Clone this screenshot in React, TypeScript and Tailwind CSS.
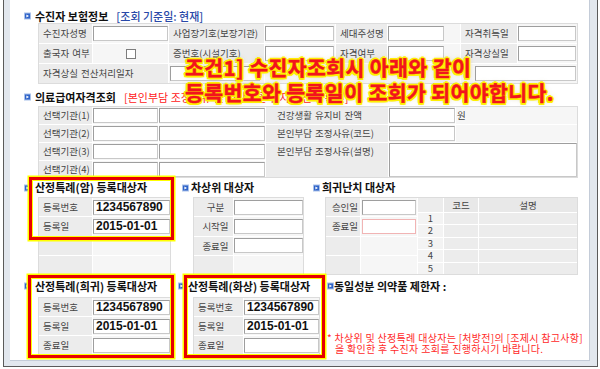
import React from "react";

const Icon = () => (
  <svg width="7" height="8" viewBox="0 0 7 8" className="shrink-0">
    <rect x="0.5" y="1" width="6" height="6" fill="#2f63c8" stroke="#a9c1ea" strokeWidth="1" />
    <path d="M2.4 2.6 L5 4 L2.4 5.4 Z" fill="#fff" />
  </svg>
);

const Title = ({ children, className = "" }: { children: React.ReactNode; className?: string }) => (
  <div className={`flex items-center text-[11px] font-bold text-[#111] whitespace-nowrap ${className}`}>
    <Icon />
    {children}
  </div>
);

const Field = ({ className = "", children }: { className?: string; children?: React.ReactNode }) => (
  <div
    className={`h-[15px] bg-white border border-[#c8c8c8] border-t-[#9e9e9e] border-l-[#9e9e9e] ${className}`}
  >
    {children}
  </div>
);

const Value = ({ children }: { children: React.ReactNode }) => (
  <Field className="w-full flex items-center pl-[2px] text-[12px] font-bold text-[#111] font-['Liberation_Sans',sans-serif]">
    {children}
  </Field>
);

const L = ({ children, className = "" }: { children?: React.ReactNode; className?: string }) => (
  <div className={`bg-[#ececec] text-[9.5px] text-[#444] [word-spacing:1px] flex items-center pl-[4px] whitespace-nowrap ${className}`}>
    {children}
  </div>
);

const V = ({ children, className = "" }: { children?: React.ReactNode; className?: string }) => (
  <div className={`bg-[#f6f6f6] flex items-center ${className}`}>{children}</div>
);

const RedBox = ({ className }: { className: string }) => (
  <div
    className={`absolute border-[3px] border-[#e60000] shadow-[0_0_0_1.5px_#ffff00,inset_0_0_0_1px_#ffff00] pointer-events-none ${className}`}
  />
);

export default function App() {
  return (
    <div className="w-[600px] h-[369px] bg-white overflow-hidden font-['Noto_Sans_CJK_KR',sans-serif]">
      <div className="ml-[3px] mr-[2px] h-[367px] border-l border-r border-b border-[#5a5a5a] bg-[#e2e7ee] pl-[6px] pr-[7px] pb-[5px] flex flex-col">
        <div className="relative flex-1 bg-white border-r border-b border-[#c4ccd8] pl-[14px]">
          {/* 수진자 보험정보 */}
          <Title className="h-[14px] mt-[9px] gap-[4px]">
            수진자 보험정보
            <span className="ml-[4px] font-medium text-[#2848a8]">[조회 기준일: 현재]</span>
          </Title>
          <div className="ml-[14px] w-[540px] grid grid-cols-[53px_75px_95px_70px_51px_72px_56px_59px] grid-rows-[19px_19px_19px] gap-px bg-white border border-[#dcdcdc]">
            <L className="pl-[3px]">수진자성명</L>
            <V><Field className="w-full" /></V>
            <L className="pl-[3px]">사업장기호(보장기관)</L>
            <V><Field className="w-[69px]" /></V>
            <L className="pl-[2px]">세대주성명</L>
            <V><Field className="w-[56px]" /></V>
            <L className="pl-[4px]">자격취득일</L>
            <V><Field className="w-[58px]" /></V>

            <L className="pl-[3px]">출국자 여부</L>
            <V className="justify-center">
              <div className="w-[10px] h-[10px] bg-white border-[1.5px] border-[#7d7d7d]" />
            </V>
            <L className="pl-[3px]">증번호(시설기호)</L>
            <V><Field className="w-[69px]" /></V>
            <L className="pl-[2px]">자격여부</L>
            <V><Field className="w-[56px]" /></V>
            <L className="pl-[4px]">자격상실일</L>
            <V><Field className="w-[58px]" /></V>

            <L className="col-span-2 pl-[3px]">자격상실 전산처리일자</L>
            <V className="pl-[1px]"><Field className="w-[90px]" /></V>
            <V className="col-span-3" />
            <V className="col-span-2 pl-[14px]"><Field className="w-[101px]" /></V>
          </div>

          {/* 의료급여자격조회 */}
          <Title className="h-[14px] mt-[6px] gap-[4px]">
            의료급여자격조회
            <span className="ml-[4px] font-normal text-[#ff2020]">[본인부담 조정사유 및 건강생활 유지비 잔액 확인]</span>
          </Title>
          <div className="mt-[2px] ml-[14px] w-[540px] grid grid-cols-[53px_65px_106px_122px_66px_121px] grid-rows-[17px_17px_17px_16px] gap-px bg-white border border-[#dcdcdc]">
            <L>선택기관(1)</L>
            <V><Field className="w-full" /></V>
            <V><Field className="w-full" /></V>
            <L className="pl-[11px]">건강생활 유지비 잔액</L>
            <V><Field className="w-full" /></V>
            <V className="pl-[1px] text-[9.5px] text-[#444]">원</V>

            <L>선택기관(2)</L>
            <V><Field className="w-full" /></V>
            <V><Field className="w-full" /></V>
            <L className="pl-[11px]">본인부담 조정사유(코드)</L>
            <V><Field className="w-full" /></V>
            <V />

            <L>선택기관(3)</L>
            <V><Field className="w-full" /></V>
            <V><Field className="w-full" /></V>
            <L className="row-span-2 pl-[11px] items-start pt-[1px]">본인부담 조정사유(설명)</L>
            <V className="col-span-2 row-span-2 items-stretch">
              <div className="w-full bg-white border border-[#c8c8c8] border-t-[#9e9e9e] border-l-[#9e9e9e]" />
            </V>

            <L>선택기관(4)</L>
            <V><Field className="w-full" /></V>
            <V><Field className="w-full" /></V>
          </div>

          {/* 산정특례(암) / 차상위 / 희귀난치 */}
          <div className="flex">
            <div className="relative w-[150px] shrink-0">
              <Title className="h-[19px] gap-[4px]">산정특례(암) 등록대상자</Title>
              <div className="ml-[14px] w-[133px] h-[78px] grid grid-cols-[53px_77px] grid-rows-4 gap-px bg-white border border-[#dcdcdc]">
                <L>등록번호</L>
                <V><Value>1234567890</Value></V>
                <L>등록일</L>
                <V><Value>2015-01-01</Value></V>
                <L />
                <V />
                <L />
                <V />
              </div>
              <RedBox className="left-[5px] top-[-1px] w-[145px] h-[63px]" />
            </div>

            <div className="ml-[8px] w-[121px] shrink-0">
              <Title className="h-[19px] gap-[2px]">차상위 대상자</Title>
              <div className="ml-[11px] w-[111px] h-[78px] grid grid-cols-[39px_69px] grid-rows-4 gap-px bg-white border border-[#dcdcdc]">
                <L className="justify-center pl-0">구분</L>
                <V><Field className="w-full" /></V>
                <L className="justify-center pl-0">시작일</L>
                <V><Field className="w-full" /></V>
                <L className="justify-center pl-0">종료일</L>
                <V><Field className="w-full" /></V>
                <L />
                <V />
              </div>
            </div>

            <div className="ml-[10px] flex-1">
              <Title className="h-[19px] gap-[2px]">희귀난치 대상자</Title>
              <div className="ml-[12px] w-[253px] h-[78px] flex gap-px bg-white border border-[#dcdcdc]">
                <div className="w-[91px] grid grid-cols-[34px_56px] grid-rows-4 gap-px">
                  <L className="justify-center pl-0">승인일</L>
                  <V className="pl-[1px]"><Field className="w-[54px]" /></V>
                  <L className="justify-center pl-0">종료일</L>
                  <V className="pl-[1px]"><Field className="w-[54px] border-[#f1b4b4] border-t-[#f1b4b4] border-l-[#f1b4b4]" /></V>
                  <L />
                  <V />
                  <L />
                  <V />
                </div>
                <div className="w-[159px] grid grid-cols-[25px_34px_98px] grid-rows-[14px_repeat(5,1fr)] gap-px text-[9.5px] text-[#444]">
                  <div className="bg-[#ececec]" />
                  <div className="bg-[#e8e8e8] flex items-center justify-center">코드</div>
                  <div className="bg-[#e8e8e8] flex items-center justify-center">설명</div>
                  {[1, 2, 3, 4, 5].map((n) => (
                    <React.Fragment key={n}>
                      <div className="bg-[#f3f3f3] flex items-center justify-center leading-none">{n}</div>
                      <div className="bg-[#ececec]" />
                      <div className="bg-[#ececec]" />
                    </React.Fragment>
                  ))}
                </div>
              </div>
            </div>
          </div>

          {/* 산정특례(희귀) / 산정특례(화상) / 동일성분 */}
          <div className="flex">
            <div className="relative w-[150px] shrink-0">
              <Title className="h-[22px] gap-[4px]">산정특례(희귀) 등록대상자</Title>
              <div className="ml-[14px] w-[133px] grid grid-cols-[53px_77px] grid-rows-[18px_18px_18px] gap-px bg-white border border-[#dcdcdc]">
                <L>등록번호</L>
                <V><Value>1234567890</Value></V>
                <L>등록일</L>
                <V><Value>2015-01-01</Value></V>
                <L>종료일</L>
                <V><Field className="w-full" /></V>
              </div>
              <RedBox className="left-[4px] top-0 w-[146px] h-[83px]" />
            </div>

            <div className="relative ml-[4px] w-[147px] shrink-0">
              <Title className="h-[22px] gap-[3px]">산정특례(화상) 등록대상자</Title>
              <div className="ml-[15px] w-[127px] grid grid-cols-[49px_75px] grid-rows-[18px_18px_18px] gap-px bg-white border border-[#dcdcdc]">
                <L>등록번호</L>
                <V><Value>1234567890</Value></V>
                <L>등록일</L>
                <V><Value>2015-01-01</Value></V>
                <L>종료일</L>
                <V><Field className="w-full" /></V>
              </div>
              <RedBox className="left-[6px] top-0 w-[141px] h-[83px]" />
            </div>

            <div className="ml-[2px] flex-1">
              <Title className="h-[22px] gap-0">동일성분 의약품 제한자 :</Title>
              <div className="mt-[36px] text-[10px] leading-[10.5px] tracking-[0.3px] text-[#ff2a2a] whitespace-nowrap">
                <div>* 차상위 및 산정특례 대상자는 [처방전]의 [조제시 참고사항]</div>
                <div className="pl-[8px]">을 확인한 후 수진자 조회를 진행하시기 바랍니다.</div>
              </div>
            </div>
          </div>

          {/* 안내 문구 */}
          <div className="absolute left-[175px] top-[55px] text-[20.5px] leading-[25px] tracking-[0.4px] font-bold text-[#f2141c] whitespace-nowrap [-webkit-text-stroke:0.5px_#f2141c] [text-shadow:2px_0_0_#ffef00,-2px_0_0_#ffef00,0_2px_0_#ffef00,0_-2px_0_#ffef00,1.5px_1.5px_0_#ffef00,-1.5px_1.5px_0_#ffef00,1.5px_-1.5px_0_#ffef00,-1.5px_-1.5px_0_#ffef00,0_0_5px_rgba(170,160,90,0.7)]">
            <div>조건1] 수진자조회시 아래와 같이</div>
            <div>등록번호와 등록일이 조회가 되어야합니다.</div>
          </div>
        </div>
      </div>
    </div>
  );
}
